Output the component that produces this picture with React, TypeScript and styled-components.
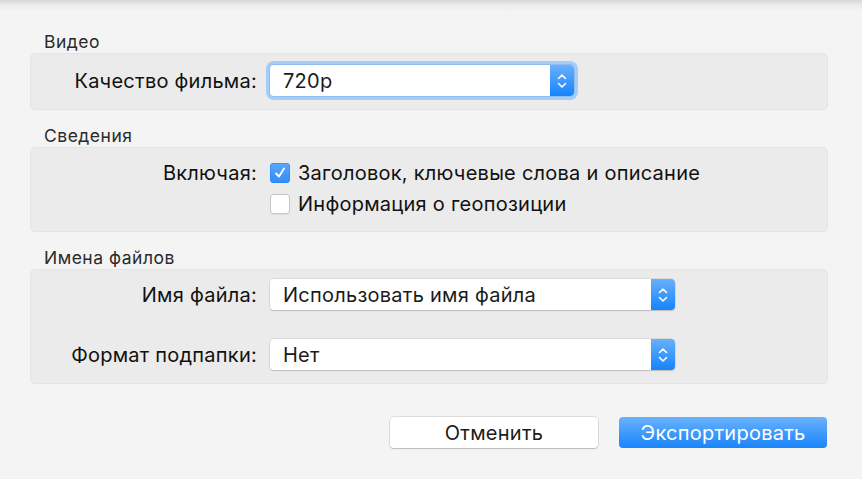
import React from 'react'
import styled, { createGlobalStyle } from 'styled-components'

const GlobalStyle = createGlobalStyle`
  html, body {
    margin: 0;
    padding: 0;
    background: #f4f4f4;
  }
  body {
    font-family: Inter, "Liberation Sans", Arial, sans-serif;
    -webkit-font-smoothing: antialiased;
  }
`

const Sheet = styled.div`
  width: 862px;
  height: 479px;
  box-sizing: border-box;
  padding: 33px 34px 0 30px;
  background: linear-gradient(#d6d6d6 0px, #ececec 5px, #f4f4f4 12px);
  display: flex;
  flex-direction: column;
`

const SectionTitle = styled.div<{ $first?: boolean }>`
  font-size: 17.5px;
  letter-spacing: 0.5px;
  line-height: 18px;
  color: #2a2a2a;
  padding-left: 14px;
  margin-top: ${p => (p.$first ? '0' : '17px')};
  margin-bottom: 2px;
`

const Panel = styled.div<{ $pad: string; $gap: number }>`
  background: #ebebeb;
  border: 1px solid #e4e4e4;
  border-radius: 5px;
  padding: ${p => p.$pad};
  display: flex;
  flex-direction: column;
  gap: ${p => p.$gap}px;
`

const Row = styled.div<{ $h: number }>`
  display: grid;
  grid-template-columns: 226px 1fr;
  column-gap: 13px;
  align-items: center;
  height: ${p => p.$h}px;
`

const Label = styled.div`
  text-align: right;
  font-size: 20px;
  letter-spacing: 0.25px;
  color: #111;
  white-space: nowrap;
`

const Empty = styled.div``

const SelectBox = styled.div<{ $w: number; $focus?: boolean }>`
  position: relative;
  width: ${p => p.$w}px;
  height: 31px;
  box-sizing: border-box;
  background: #fff;
  border-radius: 4px;
  box-shadow: ${p =>
    p.$focus
      ? '0 0 0 1px #8fbdf3, 0 0 0 4px #a6cdf8'
      : '0 0 0 0.5px #c8c8c8, 0 1px 1px rgba(0,0,0,0.22)'};
  display: flex;
  align-items: center;
  padding-left: 13px;
  font-size: 20px;
  letter-spacing: 0.25px;
  color: #1b1b1b;
`

const Stepper = styled.div`
  position: absolute;
  right: 0;
  top: 0;
  bottom: 0;
  width: 24px;
  border-radius: 0 4px 4px 0;
  background: linear-gradient(#68b1fb, #1683fb);
  display: flex;
  align-items: center;
  justify-content: center;
`

const CheckRow = styled.div`
  display: flex;
  align-items: center;
  gap: 8px;
  font-size: 20px;
  letter-spacing: 0.25px;
  color: #111;
`

const Box = styled.div<{ $on?: boolean }>`
  width: 20px;
  height: 20px;
  box-sizing: border-box;
  border-radius: 4px;
  background: ${p => (p.$on ? 'linear-gradient(#5aa8fb, #2f8cf9)' : '#fff')};
  box-shadow: ${p =>
    p.$on ? 'inset 0 0 0 0.5px #2c7fe6' : 'inset 0 0 0 1px #c6c6c6, 0 1px 0 rgba(0,0,0,0.05)'};
  display: flex;
  align-items: center;
  justify-content: center;
`

const Footer = styled.div`
  display: flex;
  justify-content: flex-end;
  gap: 21px;
  margin-top: 33px;
  padding-right: 1px;
`

const Button = styled.div<{ $primary?: boolean }>`
  width: 208px;
  height: 31px;
  box-sizing: border-box;
  border-radius: 4px;
  display: flex;
  align-items: center;
  justify-content: center;
  font-size: 20px;
  letter-spacing: 0.25px;
  color: ${p => (p.$primary ? '#fff' : '#1b1b1b')};
  background: ${p => (p.$primary ? 'linear-gradient(#6ab2fb, #1884fb)' : '#fff')};
  box-shadow: ${p =>
    p.$primary ? 'none' : '0 0 0 0.5px #c4c4c4, 0 1px 1px rgba(0,0,0,0.25)'};
`

const Chevrons = () => (
  <svg width="12" height="18" viewBox="0 0 12 18" fill="none">
    <path d="M2.5 6.5 L6 3 L9.5 6.5" stroke="#fff" strokeWidth="1.6" strokeLinecap="round" strokeLinejoin="round" />
    <path d="M2.5 11.5 L6 15 L9.5 11.5" stroke="#fff" strokeWidth="1.6" strokeLinecap="round" strokeLinejoin="round" />
  </svg>
)

const Check = () => (
  <svg width="14" height="14" viewBox="0 0 14 14" fill="none">
    <path d="M3 7.5 L6 10.5 L11 2.5" stroke="#fff" strokeWidth="1.9" strokeLinecap="round" strokeLinejoin="round" />
  </svg>
)

const Select = ({ value, width, focus }: { value: string; width: number; focus?: boolean }) => (
  <SelectBox $w={width} $focus={focus}>
    {value}
    <Stepper>
      <Chevrons />
    </Stepper>
  </SelectBox>
)

export default function App() {
  return (
    <>
      <GlobalStyle />
      <Sheet>
        <SectionTitle $first>Видео</SectionTitle>
        <Panel $pad="11px 0 13px" $gap={0}>
          <Row $h={31}>
            <Label>Качество фильма:</Label>
            <Select value="720p" width={304} focus />
          </Row>
        </Panel>

        <SectionTitle>Сведения</SectionTitle>
        <Panel $pad="13px 0 15px" $gap={7}>
          <Row $h={24}>
            <Label>Включая:</Label>
            <CheckRow>
              <Box $on>
                <Check />
              </Box>
              Заголовок, ключевые слова и описание
            </CheckRow>
          </Row>
          <Row $h={24}>
            <Empty />
            <CheckRow>
              <Box />
              Информация о геопозиции
            </CheckRow>
          </Row>
        </Panel>

        <SectionTitle>Имена файлов</SectionTitle>
        <Panel $pad="9px 0 13px" $gap={29}>
          <Row $h={31}>
            <Label>Имя файла:</Label>
            <Select value="Использовать имя файла" width={405} />
          </Row>
          <Row $h={31}>
            <Label>Формат подпапки:</Label>
            <Select value="Нет" width={405} />
          </Row>
        </Panel>

        <Footer>
          <Button>Отменить</Button>
          <Button $primary>Экспортировать</Button>
        </Footer>
      </Sheet>
    </>
  )
}
